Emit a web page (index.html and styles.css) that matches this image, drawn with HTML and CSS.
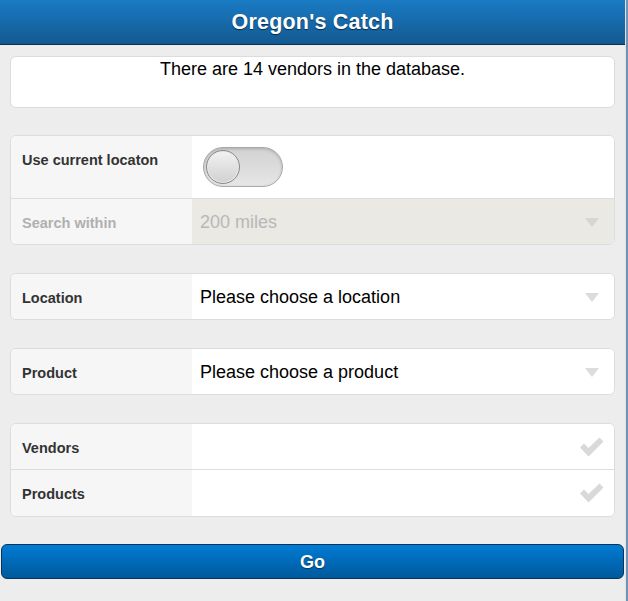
FILE: index.html
```html
<!DOCTYPE html>
<html lang="en">
<head>
<meta charset="utf-8">
<title>Oregon's Catch</title>
<link rel="stylesheet" href="styles.css">
</head>
<body>
<div class="page">
  <header class="bar"><h1 class="bar-title">Oregon's Catch</h1></header>
  <main class="content">
    <div class="notice">There are 14 vendors in the database.</div>

    <div class="group">
      <div class="row row-tall">
        <div class="label label-top">Use current locaton</div>
        <div class="field field-switch">
          <span class="switch"><span class="knob"></span></span>
        </div>
      </div>
      <div class="row row-disabled">
        <div class="label">Search within</div>
        <div class="field field-select field-disabled">
          <span class="value">200 miles</span>
          <svg class="arrow" width="14" height="9" viewBox="0 0 14 9"><path d="M0 0H14L7 9Z"/></svg>
        </div>
      </div>
    </div>

    <div class="group">
      <div class="row">
        <div class="label">Location</div>
        <div class="field field-select">
          <span class="value">Please choose a location</span>
          <svg class="arrow" width="14" height="9" viewBox="0 0 14 9"><path d="M0 0H14L7 9Z"/></svg>
        </div>
      </div>
    </div>

    <div class="group">
      <div class="row">
        <div class="label">Product</div>
        <div class="field field-select">
          <span class="value">Please choose a product</span>
          <svg class="arrow" width="14" height="9" viewBox="0 0 14 9"><path d="M0 0H14L7 9Z"/></svg>
        </div>
      </div>
    </div>

    <div class="group group-checks">
      <div class="row">
        <div class="label">Vendors</div>
        <div class="field field-check">
          <svg class="check" width="25" height="20" viewBox="0 0 25 20"><path d="M1 10.5L5 6.5L9.5 11L20.5 0.5L24.5 4.5L9.5 19.5Z"/></svg>
        </div>
      </div>
      <div class="row">
        <div class="label">Products</div>
        <div class="field field-check">
          <svg class="check" width="25" height="20" viewBox="0 0 25 20"><path d="M1 10.5L5 6.5L9.5 11L20.5 0.5L24.5 4.5L9.5 19.5Z"/></svg>
        </div>
      </div>
    </div>
  </main>
  <div class="actions">
    <button class="go" type="button">Go</button>
  </div>
</div>
<div class="edge"></div>
<div class="rail"></div>
</body>
</html>
```

FILE: styles.css
```css
* { box-sizing: border-box; }

html, body {
  margin: 0;
  padding: 0;
}

body {
  display: flex;
  min-height: 601px;
  background: #ededed;
  font-family: "Liberation Sans", Arial, sans-serif;
  color: #000;
}

.page {
  width: 625px;
  flex: none;
  background: #ededed;
}

.edge {
  width: 1px;
  background: #e2e2e2;
}

.rail {
  width: 2px;
  background: #6f93b9;
}

.bar {
  height: 45px;
  background: linear-gradient(#1a7bc4, #135991);
  border-bottom: 1px solid #0b2e4b;
  display: flex;
  align-items: center;
  justify-content: center;
  padding-top: 1px;
}

.bar-title {
  margin: 0;
  font-size: 21.5px;
  font-weight: bold;
  color: #fff;
  text-shadow: 0 1px 1px #0a2d4a;
  letter-spacing: 0.2px;
}

.content {
  padding: 11px 10px 0 10px;
  display: flex;
  flex-direction: column;
  gap: 28px;
}

.notice {
  height: 52px;
  margin-bottom: -1px;
  background: #fff;
  border: 1px solid #dcdcdc;
  border-radius: 6px;
  text-align: center;
  font-size: 18px;
  padding-top: 2px;
}

.group {
  background: #fff;
  border: 1px solid #dcdcdc;
  border-radius: 6px;
  overflow: hidden;
}

.row {
  display: flex;
  height: 45px;
  border-bottom: 1px solid #dddddd;
}

.group .row:last-child { border-bottom: none; }

.row-tall { height: 63px; }

.group-checks .row { height: 46px; }

.label {
  width: 181px;
  flex: none;
  background: #f6f6f6;
  padding-left: 11px;
  padding-top: 2px;
  font-size: 14.5px;
  font-weight: bold;
  color: #333;
  display: flex;
  align-items: center;
}

.label-top {
  align-items: flex-start;
  padding-top: 16px;
}

.row-disabled .label { color: #b0b0b0; }

.field {
  flex: 1;
  display: flex;
  align-items: center;
  background: #fff;
}

.field-switch { padding-left: 11px; }

.switch {
  width: 80px;
  height: 40px;
  border-radius: 20px;
  border: 1px solid #a8a8a8;
  background: linear-gradient(#d2d2d2, #e6e6e6);
  box-shadow: inset 0 1px 3px rgba(0,0,0,0.18);
  display: flex;
  align-items: center;
  padding-left: 2px;
}

.knob {
  width: 34px;
  height: 34px;
  border-radius: 50%;
  border: 1px solid #8a8a8a;
  background: linear-gradient(#f2f2f2, #d0d0d0);
  box-shadow: 0 0 0 1px #e8e8e8 inset;
}

.field-select {
  padding-left: 8px;
  padding-right: 15px;
  padding-top: 2px;
  justify-content: space-between;
  font-size: 18px;
}

.field-disabled {
  background: #eae9e3;
  color: #b8b8b8;
}

.arrow { fill: #dcdcdc; }
.field-disabled .arrow { fill: #d6d6d6; }

.field-check {
  justify-content: flex-end;
  padding-right: 10px;
}

.check { fill: #d9d9d9; }

.actions {
  padding: 27px 1px 0 1px;
}

.go {
  display: block;
  width: 100%;
  height: 35px;
  border: 1px solid #03365a;
  border-radius: 6px;
  background: linear-gradient(#007bd3, #00599c);
  color: #fff;
  font-family: "Liberation Sans", Arial, sans-serif;
  font-size: 18px;
  font-weight: bold;
  text-shadow: 0 1px 1px #00365e;
  cursor: pointer;
  padding: 2px 0 0 0;
}
```
